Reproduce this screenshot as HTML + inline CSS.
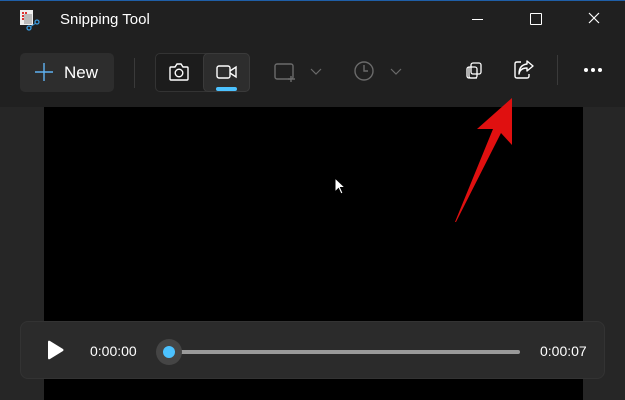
<!DOCTYPE html>
<html><head><style>
body{margin:0;width:625px;height:400px;background:#202020;position:relative;overflow:hidden;font-family:"Liberation Sans",sans-serif;color:#fff}
.a{position:absolute}
</style></head><body>
<div class="a" style="left:0;top:0;width:625px;height:1px;background:#1f5fa8"></div>
<svg class="a" style="left:18px;top:9px" width="24" height="22" viewBox="0 0 24 22">
<rect x="2" y="1" width="13" height="15" fill="#eee"/>
<rect x="4" y="3" width="2" height="2" fill="#d33"/><rect x="7" y="3" width="2" height="2" fill="#d33"/><rect x="4" y="6" width="2" height="2" fill="#d33"/><rect x="4" y="9" width="2" height="2" fill="#d33"/>
<rect x="6" y="5" width="8" height="10" fill="#bbb"/>
<circle cx="11" cy="19" r="2" fill="none" stroke="#3a9be0" stroke-width="1.3"/><circle cx="19" cy="13" r="2" fill="none" stroke="#3a9be0" stroke-width="1.3"/>
<path d="M12 18 L18 14" stroke="#3a9be0"/>
</svg>
<div class="a" style="left:60px;top:11px;font-size:15px;color:#fff">Snipping Tool</div>
<div class="a" style="left:472px;top:19px;width:11px;height:1px;background:#fff"></div>
<div class="a" style="left:530px;top:13px;width:10px;height:10px;border:1px solid #fff;border-radius:1px"></div>
<svg class="a" style="left:588px;top:12px" width="12" height="12"><path d="M1 1L11 11M11 1L1 11" stroke="#fff" stroke-width="1.2"/></svg>
<div class="a" style="left:20px;top:53px;width:94px;height:39px;background:#2d2d2d;border-radius:5px"></div>
<svg class="a" style="left:35px;top:63px" width="18" height="18"><path d="M9 0V18M0 9H18" stroke="#5fb2f2" stroke-width="1.4"/></svg>
<div class="a" style="left:64px;top:63px;font-size:17px">New</div>
<div class="a" style="left:134px;top:58px;width:1px;height:30px;background:#3a3a3a"></div>
<div class="a" style="left:155px;top:53px;width:95px;height:39px;background:#1c1c1c;border:1px solid #333;border-radius:5px;box-sizing:border-box"></div>
<div class="a" style="left:203px;top:53px;width:47px;height:39px;background:#2d2d2d;border:1px solid #3a3a3a;border-radius:5px;box-sizing:border-box"></div>
<svg class="a" style="left:168px;top:62px" width="22" height="20" viewBox="0 0 22 20"><path d="M3 5H7L9 2H13L15 5H19Q20 5 20 6V17Q20 18 19 18H3Q2 18 2 17V6Q2 5 3 5Z" fill="none" stroke="#fff" stroke-width="1.4"/><circle cx="11" cy="11" r="3.8" fill="none" stroke="#fff" stroke-width="1.4"/></svg>
<svg class="a" style="left:216px;top:63px" width="22" height="18" viewBox="0 0 22 18"><rect x="1" y="3" width="13" height="12" rx="2" fill="none" stroke="#fff" stroke-width="1.4"/><path d="M14 8L20 4V14L14 10" fill="none" stroke="#fff" stroke-width="1.4"/></svg>
<div class="a" style="left:216px;top:87px;width:21px;height:4px;background:#4cc2ff;border-radius:2px"></div>
<svg class="a" style="left:274px;top:62px" width="24" height="20"><rect x="1" y="2" width="18" height="15" rx="2" fill="none" stroke="#6a6a6a" stroke-width="1.4"/><path d="M17 14V20M14 17H21" stroke="#6a6a6a" stroke-width="1.4"/></svg>
<svg class="a" style="left:310px;top:68px" width="12" height="8"><path d="M1 1L6 6L11 1" fill="none" stroke="#6a6a6a" stroke-width="1.2"/></svg>
<svg class="a" style="left:353px;top:60px" width="22" height="22"><circle cx="11" cy="11" r="9" fill="none" stroke="#6a6a6a" stroke-width="1.4"/><path d="M11 5V11H15" fill="none" stroke="#6a6a6a" stroke-width="1.4"/></svg>
<svg class="a" style="left:390px;top:68px" width="12" height="8"><path d="M1 1L6 6L11 1" fill="none" stroke="#6a6a6a" stroke-width="1.2"/></svg>
<svg class="a" style="left:466px;top:62px" width="18" height="18"><rect x="5" y="1" width="10" height="11" rx="2" fill="none" stroke="#fff" stroke-width="1.3"/><path d="M3 5V14Q3 16 5 16H11" fill="none" stroke="#fff" stroke-width="1.3"/><rect x="1" y="5" width="10" height="11" rx="2" fill="none" stroke="#fff" stroke-width="1.3"/></svg>
<svg class="a" style="left:513px;top:60px" width="22" height="20" viewBox="0 0 22 20"><path d="M8 2H4Q2 2 2 4V16Q2 18 4 18H14Q16 18 16 16V14" fill="none" stroke="#fff" stroke-width="1.4"/><path d="M6 14Q7 8 14 8V11L20 6L14 1V4Q6 5 6 14Z" fill="none" stroke="#fff" stroke-width="1.4" stroke-linejoin="round"/></svg>
<div class="a" style="left:557px;top:55px;width:1px;height:30px;background:#3a3a3a"></div>
<div class="a" style="left:584px;top:68px;font-size:0">
<span style="display:inline-block;width:4px;height:4px;background:#fff;border-radius:2px;margin-right:3px"></span><span style="display:inline-block;width:4px;height:4px;background:#fff;border-radius:2px;margin-right:3px"></span><span style="display:inline-block;width:4px;height:4px;background:#fff;border-radius:2px"></span></div>
<div class="a" style="left:0;top:107px;width:625px;height:293px;background:#262626"></div>
<div class="a" style="left:44px;top:107px;width:539px;height:293px;background:#000"></div>
<svg class="a" style="left:334px;top:177px" width="12" height="18"><path d="M1 1V15L4.5 11.5L7 17L9 16L6.5 10.5H11Z" fill="#fff" stroke="#000" stroke-width="1"/></svg>
<div class="a" style="left:20px;top:321px;width:585px;height:58px;background:#2b2b2b;border:1px solid #333;border-radius:8px;box-sizing:border-box"></div>
<svg class="a" style="left:46px;top:340px" width="20" height="20"><path d="M2 2Q2 0 4 1L17 9Q18 10 17 11L4 19Q2 20 2 18Z" fill="#fff"/></svg>
<div class="a" style="left:90px;top:343px;font-size:14px">0:00:00</div>
<div class="a" style="left:170px;top:350px;width:350px;height:4px;background:#9a9a9a;border-radius:2px"></div>
<div class="a" style="left:156px;top:339px;width:26px;height:26px;background:#454545;border-radius:13px"></div>
<div class="a" style="left:163px;top:346px;width:12px;height:12px;background:#4cc2ff;border-radius:6px"></div>
<div class="a" style="left:540px;top:343px;font-size:14px">0:00:07</div>
<svg class="a" style="left:440px;top:85px" width="90" height="145"><path d="M15 137L53 44L37 44L72 13L72 60L61 48L16 137Z" fill="#e01010"/></svg>
</body></html>
